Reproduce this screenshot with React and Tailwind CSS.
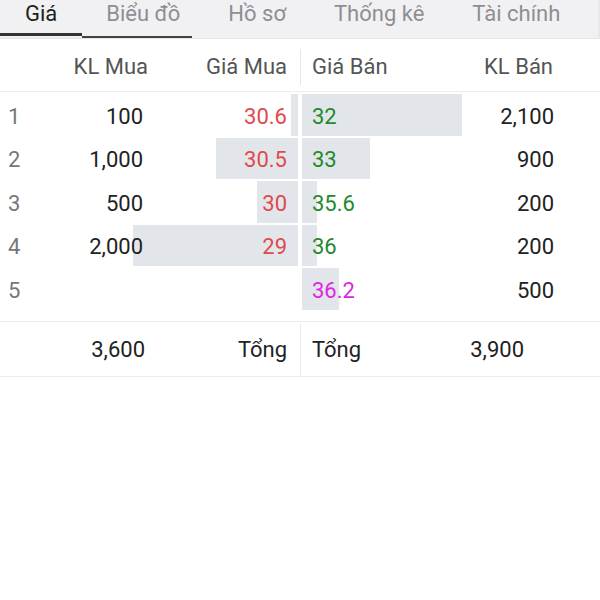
import React from "react";

const tabs = ["Giá", "Biểu đồ", "Hồ sơ", "Thống kê", "Tài chính"];

const rows = [
  { i: 1, klMua: "100", giaMua: "30.6", buyBar: 7, giaBan: "32", sellBar: 160, klBan: "2,100", banColor: "text-[#24892c]" },
  { i: 2, klMua: "1,000", giaMua: "30.5", buyBar: 82, giaBan: "33", sellBar: 68, klBan: "900", banColor: "text-[#24892c]" },
  { i: 3, klMua: "500", giaMua: "30", buyBar: 41, giaBan: "35.6", sellBar: 15, klBan: "200", banColor: "text-[#24892c]" },
  { i: 4, klMua: "2,000", giaMua: "29", buyBar: 165, giaBan: "36", sellBar: 15, klBan: "200", banColor: "text-[#24892c]" },
  { i: 5, klMua: "", giaMua: "", buyBar: 0, giaBan: "36.2", sellBar: 37, klBan: "500", banColor: "text-[#e026e0]" },
];

const App = () => {
  return (
    <div
      className="w-[600px] h-[600px] bg-white text-[22px] overflow-hidden"
      style={{ fontFamily: "Roboto, 'Noto Sans', sans-serif" }}
    >
      {/* tab bar */}
      <div className="relative h-[39px] bg-[#f1f1f3] border-b border-[#e4e4e6] border-r-2 border-r-[#e8e8ea]">
        <div className="flex h-[36px] items-start">
          {tabs.map((t, idx) => (
            <div
              key={t}
              className={
                "leading-[28px] whitespace-nowrap " +
                (idx === 0 ? "px-[25px] text-[#222]" : "px-[24px] text-[#8e8e93]")
              }
            >
              {t}
            </div>
          ))}
        </div>
        <div className="absolute left-0 top-[33px] w-[82px] h-[3px] bg-[#333]" />
        <div className="absolute left-[82px] top-[36px] w-[110px] h-[2px] bg-[#444]" />
      </div>

      {/* header */}
      <div className="flex h-[53px] pt-[3px] items-center border-b border-[#ececec] text-[#555]">
        <div className="w-[300px] flex items-center">
          <div className="w-[148px] text-right">KL Mua</div>
          <div className="flex-1 text-right pr-[13px]">Giá Mua</div>
        </div>
        <div className="w-px h-[36px] bg-[#e6e6e6]" />
        <div className="flex-1 flex items-center">
          <div className="pl-[11px] w-[140px]">Giá Bán</div>
          <div className="flex-1 text-right pr-[47px]">KL Bán</div>
        </div>
      </div>

      {/* rows */}
      <div className="pt-[1px] pb-[10px] border-b border-[#ececec]">
        {rows.map((r) => (
          <div key={r.i} className="flex h-[43.5px]">
            <div className="relative w-[298px] flex items-center pt-[3px]">
              {r.buyBar > 0 && (
                <div
                  className="absolute right-0 top-[1px] bottom-[1px] bg-[#e2e6eb]"
                  style={{ width: r.buyBar }}
                />
              )}
              <div className="relative w-[30px] pl-[8px] text-[#777]">{r.i}</div>
              <div className="relative w-[113px] text-right text-[#222]">{r.klMua}</div>
              <div className="relative flex-1 text-right pr-[11px] text-[#df4a50]">{r.giaMua}</div>
            </div>
            <div className="w-[4px]" />
            <div className="relative flex-1 flex items-center pt-[3px]">
              <div
                className="absolute left-0 top-[1px] bottom-[1px] bg-[#e2e6eb]"
                style={{ width: r.sellBar }}
              />
              <div className={"relative pl-[10px] w-[140px] " + r.banColor}>{r.giaBan}</div>
              <div className="relative flex-1 text-right pr-[46px] text-[#222]">{r.klBan}</div>
            </div>
          </div>
        ))}
      </div>

      {/* totals */}
      <div className="flex h-[55px] pt-[2px] items-center border-b border-[#ececec] text-[#222]">
        <div className="w-[300px] flex items-center">
          <div className="w-[145px] text-right">3,600</div>
          <div className="flex-1 text-right pr-[13px]">Tổng</div>
        </div>
        <div className="w-px h-[53px] bg-[#ececec]" />
        <div className="flex-1 flex items-center">
          <div className="pl-[11px] w-[140px]">Tổng</div>
          <div className="w-[83px] text-right">3,900</div>
        </div>
      </div>
    </div>
  );
};

export default App;
